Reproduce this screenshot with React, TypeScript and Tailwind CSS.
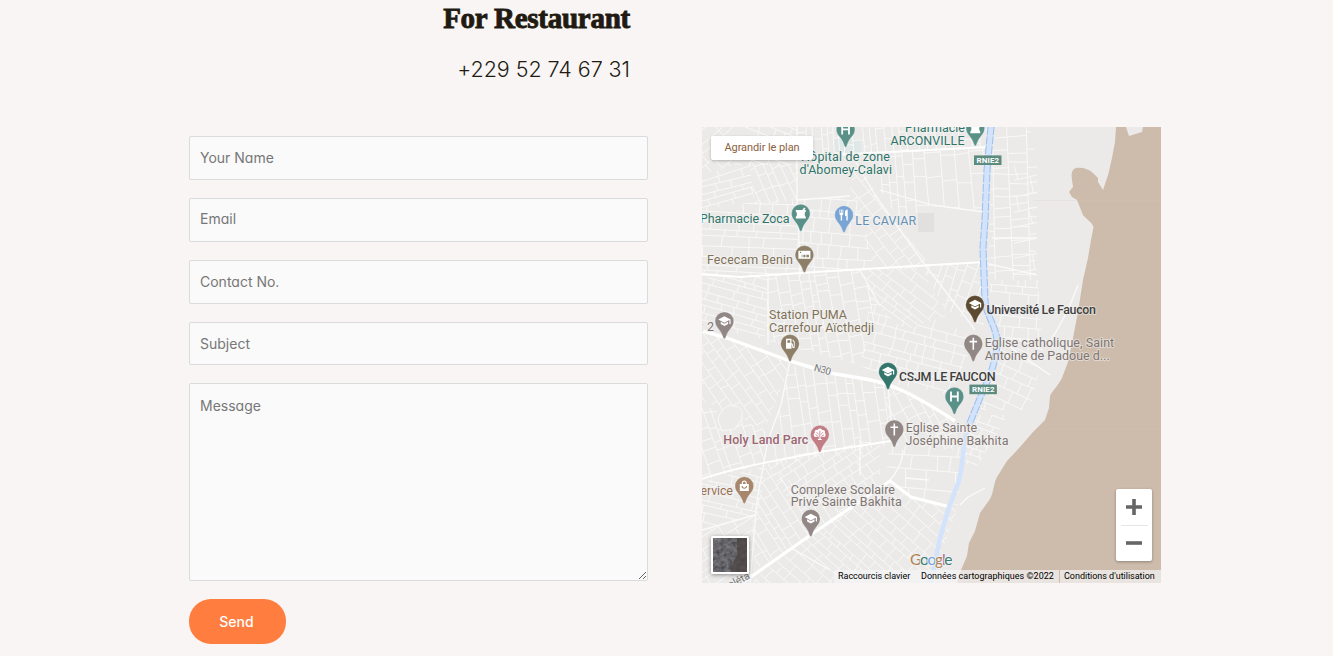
import type { ReactNode } from "react";

type Pt = [number, number];

type Patch = { poly: Pt[]; angle: number; row: number; step: number };

const PATCHES: Patch[] = [
  { poly: [[702, 127], [745, 127], [735, 165], [702, 175]], angle: -40, row: 9, step: 20 },
  { poly: [[745, 127], [797, 127], [797, 165], [735, 165]], angle: 20, row: 9, step: 18 },
  { poly: [[702, 175], [750, 162], [754, 200], [702, 210]], angle: -16, row: 8, step: 26 },
  { poly: [[750, 162], [797, 165], [797, 200], [754, 205]], angle: 65, row: 7, step: 16 },
  { poly: [[702, 208], [797, 198], [800, 274], [702, 278]], angle: 3, row: 8, step: 24 },
  { poly: [[797, 127], [868, 127], [868, 154], [797, 157]], angle: 86, row: 8, step: 22 },
  { poly: [[797, 200], [856, 196], [875, 270], [800, 274]], angle: 4, row: 10, step: 14 },
  { poly: [[856, 155], [880, 200], [925, 258], [925, 270], [875, 270], [850, 190]], angle: 52, row: 13, step: 14 },
  { poly: [[868, 127], [988, 127], [986, 148], [870, 154]], angle: 84, row: 9, step: 18 },
  { poly: [[870, 154], [986, 148], [984, 212], [932, 205], [900, 222], [880, 190]], angle: 85, row: 11, step: 24 },
  { poly: [[992, 127], [1030, 127], [1038, 170], [1035, 280], [988, 280]], angle: 88, row: 13, step: 13 },
  { poly: [[1014, 165], [1037, 165], [1037, 275], [1014, 275]], angle: -12, row: 12, step: 30 },
  { poly: [[702, 278], [768, 274], [765, 340], [702, 325]], angle: 16, row: 7, step: 20 },
  { poly: [[768, 274], [860, 270], [880, 306], [860, 365], [765, 340]], angle: 80, row: 10, step: 13 },
  { poly: [[860, 270], [920, 264], [945, 316], [905, 330], [870, 300]], angle: 38, row: 8, step: 19 },
  { poly: [[920, 264], [984, 262], [984, 326], [945, 310]], angle: -72, row: 8, step: 22 },
  { poly: [[870, 300], [905, 330], [940, 318], [975, 340], [950, 395], [888, 383], [860, 365]], angle: 15, row: 9, step: 15 },
  { poly: [[988, 280], [1038, 280], [1042, 340], [1000, 340]], angle: 5, row: 10, step: 13 },
  { poly: [[1000, 340], [1046, 340], [1030, 410], [980, 410]], angle: 24, row: 9, step: 17 },
  { poly: [[702, 332], [765, 348], [790, 365], [765, 430], [702, 400]], angle: 55, row: 9, step: 16 },
  { poly: [[790, 365], [885, 385], [890, 445], [770, 466], [775, 430]], angle: 82, row: 9, step: 19 },
  { poly: [[885, 385], [950, 415], [960, 450], [890, 445]], angle: 62, row: 9, step: 17 },
  { poly: [[702, 405], [765, 430], [766, 464], [702, 480]], angle: 72, row: 10, step: 14 },
  { poly: [[702, 482], [766, 466], [758, 515], [702, 530]], angle: 13, row: 7, step: 22 },
  { poly: [[766, 464], [880, 442], [880, 487], [840, 512], [790, 502]], angle: -34, row: 9, step: 13 },
  { poly: [[766, 466], [840, 512], [812, 534], [755, 570], [752, 520]], angle: 58, row: 8, step: 17 },
  { poly: [[702, 530], [755, 515], [750, 583], [702, 583]], angle: -32, row: 8, step: 24 },
  { poly: [[840, 512], [892, 482], [912, 497], [958, 507], [935, 570], [860, 583], [750, 583], [812, 534]], angle: 42, row: 8, step: 15 },
  { poly: [[890, 445], [963, 447], [958, 505], [912, 497], [885, 478]], angle: 4, row: 14, step: 24 },
  { poly: [[968, 415], [1008, 415], [975, 470], [962, 460]], angle: 20, row: 8, step: 14 },
];

function random(seed: number) {
  let s = seed * 7919 + 17;
  return () => {
    s = (s * 16807) % 2147483647;
    return s / 2147483647;
  };
}

function streets({ poly, angle, row, step }: Patch, seed: number) {
  const rnd = random(seed + 1);
  const cx = poly.reduce((a, p) => a + p[0], 0) / poly.length;
  const cy = poly.reduce((a, p) => a + p[1], 0) / poly.length;
  const r = Math.max(...poly.map((p) => Math.hypot(p[0] - cx, p[1] - cy)));
  const rad = (angle * Math.PI) / 180;
  const at = (u: number, v: number) =>
    `${(cx + u * Math.cos(rad) - v * Math.sin(rad)).toFixed(1)} ${(cy + u * Math.sin(rad) + v * Math.cos(rad)).toFixed(1)}`;
  let d = "";
  let v = -r;
  let tilt = 0;
  while (v < r) {
    const next = v + row * (0.65 + rnd() * 0.8);
    const nextTilt = (rnd() - 0.5) * 3;
    d += `M${at(-r, v - tilt)}L${at(r, v + tilt)}`;
    let u = -r + rnd() * step;
    while (u < r) {
      const lean = (rnd() - 0.5) * 3;
      d += `M${at(u, v + (tilt * u) / r)}L${at(u + lean, next + (nextTilt * u) / r)}`;
      u += step * (0.5 + rnd());
    }
    v = next;
    tilt = nextTilt;
  }
  return d;
}

const COAST =
  "M1116 127L1115 142L1112 158C1110 166 1109 173 1107 178L1103 190L1098 182V178L1093 173C1089 169 1082 167 1076 168C1072 169 1071 174 1072 180L1073 187L1069 192L1072 197L1077 200L1083 215C1086 219 1092 222 1093.500 227L1091 240L1088 258L1083 280L1078 312L1073 338L1068 362L1062 378C1058 386 1052 391 1050 396L1049 408L1045 420L1033 432L1020 447L1007 461L997 477C993 485 994 492 990 499L980 513L975 531L969 543L967 556L961 570L957 583H1161V127H1143L1142 132L1129 136L1126 127Z";

const RIVER_NORTH = "M991 124L987 170L985 220L983 248L985 300C986 316 996 325 997 341C997 364 986 384 980 398L969 426";
const RIVER_SOUTH = "M970 422L965 438C962 460 962 475 957 486L948 510L940 538L931 583";

type IconName = "cap" | "cross" | "h" | "flask" | "fork" | "money" | "fuel" | "tree" | "bag";

const ICONS: Record<IconName, ReactNode> = {
  cap: <path d="M-6.200 -1.800L0 -5L6.200 -1.800V2.800H5V-1.100L0 1.600ZM-3.700 .5L0 2.500L3.700 .5V2.700L0 4.700L-3.700 2.700Z" />,
  cross: <path d="M-.8 -6H.8V-3H3.800V-1.400H.8V6H-.8V-1.400H-3.800V-3H-.8Z" />,
  h: <path d="M-4.300 -5H-2.500V-1H2.500V-5H4.300V5H2.500V.8H-2.500V5H-4.300Z" />,
  flask: <path d="M-5 -3.500H1.500L3.300 -6L4.700 -5L3.700 -3.500H5V-2C3.500 -1 3.500 2 5 3.500V5H-5V3.500C-3.500 2 -3.500 -1 -5 -2Z" />,
  fork: <path d="M-4.500 -5.500H-3.900V-2H-3.200V-5.500H-2.200V-2H-1.500V-5.500H-.7V-1.500C-.7 -.5 -1.200 0 -1.900 .2V5.500H-3.300V.2C-4 0 -4.500 -.5 -4.500 -1.500ZM1 -3C1 -4.500 2 -5.500 3.700 -5.500V5.500H2.300V1H1Z" />,
  money: (
    <>
      <path d="M-6 -4H6V4H-6Z" />
      <path d="M-4.500 -3H-3.200V-1.700H-4.500ZM-2.700 0H-2V2.500H-2.700ZM-1 0H1V2.500H-1ZM2 0H4.500V2.500H2Z" fill="#8e8068" />
    </>
  ),
  fuel: (
    <>
      <path d="M-4 5V-5H1.500V-.5C3 -.5 3 1 3.100 2.500C3.200 3.300 3.800 3.200 3.800 2.500V-1.500L2.400 -3.500L3 -4.200L4.700 -2V2.700C4.700 5 2.200 5 2.200 2.700C2.200 1.500 2.200 .7 1.500 .6V5Z" />
      <path d="M-2.600 -3.600H.2V-1H-2.600Z" fill="#8e8068" />
    </>
  ),
  tree: (
    <>
      <path d="M-1 2L-4 2.500C-6.500 2 -6.500 -1 -5 -1.700C-5.800 -4 -3.500 -5.500 -2.200 -4.500C-1.200 -6.500 1.500 -6.500 2.200 -4.500C4.300 -5 5.800 -3.500 5 -1.700C6.500 -1 6 2.500 4 2.500L1 2V4.200L2.500 5.300H-2.500L-1 4.200Z" />
      <path d="M-3.300 -2.500L-1 0M3.300 -2.500L1 0M0 -4V4M-4.300 .3L-2 1.200M4.300 .3L2 1.200" stroke="#c17e84" strokeWidth=".8" />
    </>
  ),
  bag: (
    <>
      <path d="M-4.500 -2H-2.500V-3C-2.500 -6.300 2.500 -6.300 2.500 -3V-2H4.500V5H-4.500ZM-1.300 -2H1.300V-3C1.300 -4.600 -1.300 -4.600 -1.300 -3Z" fillRule="evenodd" />
      <path d="M-2.300 0C-2 3 2 3 2.300 0" fill="none" stroke="#a7866b" strokeWidth="1.100" />
    </>
  ),
};

const PINS: { x: number; y: number; color: string; icon: IconName }[] = [
  { x: 845.6, y: 129.4, color: "#599188", icon: "h" },
  { x: 975.3, y: 128.2, color: "#599188", icon: "flask" },
  { x: 800.8, y: 213.6, color: "#599188", icon: "flask" },
  { x: 844, y: 215, color: "#78a5d3", icon: "fork" },
  { x: 804.4, y: 254.8, color: "#8e8068", icon: "money" },
  { x: 724.4, y: 321.2, color: "#918785", icon: "cap" },
  { x: 790, y: 343.8, color: "#8e8068", icon: "fuel" },
  { x: 888, y: 371.8, color: "#34766b", icon: "cap" },
  { x: 975, y: 304.8, color: "#5d4b31", icon: "cap" },
  { x: 973.3, y: 343.8, color: "#918785", icon: "cross" },
  { x: 954.4, y: 396.6, color: "#599188", icon: "h" },
  { x: 894.3, y: 429.4, color: "#918785", icon: "cross" },
  { x: 819.8, y: 434.6, color: "#c17e84", icon: "tree" },
  { x: 744.3, y: 486, color: "#a7866b", icon: "bag" },
  { x: 810.8, y: 518.8, color: "#918785", icon: "cap" },
];

const TEAL = "#2f7469";
const GREY = "#7f7572";
const OLIVE = "#807258";
const DARK = "#3f3f3f";

type Label = { text: string; x: number; y: number; w: number; color: string; bold?: boolean };

const LABELS: Label[] = [
  { text: "Hôpital de zone", x: 801, y: 161, w: 89, color: TEAL },
  { text: "d'Abomey-Calavi", x: 799.5, y: 173.6, w: 92.5, color: TEAL },
  { text: "Pharmacie", x: 905, y: 132, w: 60, color: TEAL },
  { text: "ARCONVILLE", x: 890.5, y: 144.6, w: 74, color: TEAL },
  { text: "Pharmacie Zoca", x: 700, y: 223, w: 89.5, color: TEAL },
  { text: "LE CAVIAR", x: 855.3, y: 224.5, w: 61, color: "#6590b5" },
  { text: "Fececam Benin", x: 707, y: 264.2, w: 86, color: OLIVE },
  { text: "Station PUMA", x: 769, y: 319, w: 78, color: OLIVE },
  { text: "Carrefour Aïcthedji", x: 769, y: 331.6, w: 105, color: OLIVE },
  { text: "t 2", x: 698.5, y: 330.5, w: 15.5, color: GREY },
  { text: "Université Le Faucon", x: 986.5, y: 314.3, w: 109.5, color: DARK, bold: true },
  { text: "Eglise catholique, Saint", x: 984.7, y: 347, w: 129.5, color: GREY },
  { text: "Antoine de Padoue d...", x: 984.7, y: 359.6, w: 125, color: GREY },
  { text: "CSJM LE FAUCON", x: 899, y: 380.9, w: 96.5, color: DARK, bold: true },
  { text: "Eglise Sainte", x: 905.7, y: 432.2, w: 71.5, color: GREY },
  { text: "Joséphine Bakhita", x: 905.5, y: 444.9, w: 103, color: GREY },
  { text: "Holy Land Parc", x: 723.3, y: 444, w: 85, color: "#9c6670", bold: true },
  { text: "ervice", x: 700.5, y: 495.3, w: 32.5, color: "#9a7152" },
  { text: "Complexe Scolaire", x: 790.7, y: 493.6, w: 104.3, color: GREY },
  { text: "Privé Sainte Bakhita", x: 790.7, y: 506.4, w: 111, color: GREY },
];

function Shield({ x, y }: { x: number; y: number }) {
  return (
    <g>
      <rect x={x} y={y} width="27.500" height="9.600" fill="#5c8b80" />
      <text x={x + 2.6} y={y + 7.7} textLength="22.500" className="font-['Roboto',sans-serif] text-[8px] font-bold" fill="#fff">
        RNIE2
      </text>
    </g>
  );
}

function MapDrawing() {
  return (
    <svg viewBox="702 127 459 456" className="block h-full w-full">
      <rect x="702" y="127" width="459" height="456" fill="#ebeae9" />
      <rect x="918" y="213" width="16" height="19" fill="#e1e0df" />
      <rect x="834" y="139" width="27" height="14" fill="#dfe8e6" />
      <defs>
        {PATCHES.map((p, i) => (
          <clipPath id={`block-${i}`} key={i}>
            <polygon points={p.poly.map((q) => q.join(",")).join(" ")} />
          </clipPath>
        ))}
      </defs>
      <g stroke="#f8f8f7" strokeWidth="1" fill="none">
        {PATCHES.map((p, i) => (
          <g key={i} clipPath={`url(#block-${i})`}>
            <path d={streets(p, i)} />
          </g>
        ))}
      </g>
      <path d="M718 420C720 409 728 404 734 406C742 407 744 413 741 420L735 429L722 431Z" fill="#ebeae9" stroke="#f8f8f7" />
      <g stroke="#fafafa" strokeWidth="1.300" fill="none" strokeLinejoin="round">
        <path d="M797 127V200L800 260V276M797 200L850 196M850 152L875 195L925 265L960 310L975 330M768 274V345M860 270L880 306" />
        <path d="M790 360L781 405L768 440L757 500L750 583M888 385L893 445M903 450C903 462 895 475 890 480M702 530L755 515M791 548L830 570" />
        <path d="M1078 285C1068 312 1060 325 1051 340M1000 340L1050 375M992 238H1037M985 263L1037 275M960 505L968 497L985 488" />
        <path d="M860 440V475M905 478L929 480M880 190L932 205L984 212" />
      </g>
      <g stroke="#fff" fill="none" strokeLinejoin="round">
        <path d="M702 274L740 277L830 271L984 262M797 157L870 153L988 147" strokeWidth="1.800" />
        <path d="M702 479C740 466 780 460 820 452L897 440" strokeWidth="1.800" />
        <path d="M702 331L727 338L790 361L830 373L860 378C890 382 915 395 955 421" strokeWidth="3.400" />
        <path d="M742 583L765 567L812 534L850 508L890 481L911 497L950 507" strokeWidth="3.200" />
      </g>
      <path d={COAST} fill="#cdbbab" />
      <path d="M1033 200.500H1161M1040 429.500H1161" stroke="#d6c8b8" strokeWidth=".6" opacity=".4" />
      <path d={RIVER_SOUTH} fill="none" stroke="#d2e3fb" strokeWidth="4.600" />
      <path d={RIVER_NORTH} fill="none" stroke="#d2e3fb" strokeWidth="6" />
      <g fill="none" stroke="#9fc2ee" strokeWidth="1.100" strokeDasharray="8 1.500">
        <path d="M988 127L984 170L982 220L980 248L982 300C983 316 993 325 994 341C994 364 983 384 977 398L966 425" />
        <path d="M994 127L990 170L988 220L986 248L988 300C989 316 999 325 1000 341C1000 364 989 384 983 398L972 425" />
      </g>
      <Shield x={974} y={155.4} />
      <Shield x={969.4} y={384.6} />
      {PINS.map((p, i) => (
        <g key={i} transform={`translate(${p.x} ${p.y})`}>
          <path
            d="M0 -9.300A9.300 9.300 0 0 1 9.300 0C9.300 3.300 7.600 5.700 5.500 8.200C3.400 10.800 2 13.500 1.200 16.600Q0 18.600 -1.200 16.600C-2 13.500 -3.400 10.800 -5.500 8.200C-7.600 5.700 -9.300 3.300 -9.300 0A9.300 9.300 0 0 1 0 -9.300Z"
            fill={p.color}
            stroke="#f2f1f0"
            strokeWidth=".3"
          />
          <g fill="#fff">{ICONS[p.icon]}</g>
        </g>
      ))}
      <g stroke="#f1f0ef" strokeWidth="2" strokeLinejoin="round" paintOrder="stroke" className="font-['Roboto',sans-serif] text-[12.5px]">
        {LABELS.map((l) => (
          <text key={l.text} x={l.x} y={l.y} textLength={l.w} fill={l.color} className={l.bold ? "font-medium" : "font-normal"} strokeOpacity={l.x + l.w > 1070 ? 0.55 : 1}>
            {l.text}
          </text>
        ))}
        <text transform="translate(813.500 370.500) rotate(16)" textLength="17" fill="#777" className="text-[10px]">
          N30
        </text>
        <text transform="translate(730 588.500) rotate(-27)" fill="#777" className="text-[10.5px]">
          pléta
        </text>
        <text x="910" y="564.500" textLength="42.500" className="font-['Lato',sans-serif] text-[15.5px]">
          <tspan fill="#ad8255">G</tspan>
          <tspan fill="#397d73">o</tspan>
          <tspan fill="#6fa4e8">o</tspan>
          <tspan fill="#ad8255">g</tspan>
          <tspan fill="#a269a5">l</tspan>
          <tspan fill="#397d73">e</tspan>
        </text>
      </g>
    </svg>
  );
}

function Satellite() {
  return (
    <svg viewBox="0 0 34 34" className="block h-full w-full">
      <filter id="terrain" colorInterpolationFilters="sRGB">
        <feTurbulence type="fractalNoise" baseFrequency=".25" numOctaves="3" seed="8" />
        <feColorMatrix values=".35 0 0 0 .22 .35 0 0 0 .22 .35 0 0 0 .24 0 0 0 0 1" />
      </filter>
      <rect width="34" height="34" filter="url(#terrain)" />
      <path d="M24 0H34V34H18L20 24L24 17Z" fill="#4c4343" opacity=".75" />
    </svg>
  );
}

function LocationMap() {
  return (
    <div className="relative h-[456px] w-[459px] overflow-hidden font-['Roboto',sans-serif]">
      <MapDrawing />
      <a className="absolute left-[9px] top-[9px] flex h-6 w-[102px] items-center justify-center rounded-[2px] bg-white text-[11px] tracking-[-0.08px] text-[#8b6140] shadow-[0_1px_3px_rgba(0,0,0,0.25)]">
        Agrandir le plan
      </a>
      <div className="absolute bottom-[9px] left-[9px] size-[38px] overflow-hidden rounded-[2px] border-2 border-white shadow-[0_1px_4px_rgba(0,0,0,0.4)]">
        <Satellite />
      </div>
      <div className="absolute bottom-[22px] right-[9px] flex h-[72px] w-9 flex-col items-center rounded-[2px] bg-white shadow-[0_1px_3px_rgba(0,0,0,0.3)]">
        <button className="flex h-9 w-full items-center justify-center" aria-label="Zoom avant">
          <svg viewBox="0 0 16 16" className="size-4">
            <path d="M6.200 0H9.800V6.200H16V9.800H9.800V16H6.200V9.800H0V6.200H6.200Z" fill="#666" />
          </svg>
        </button>
        <div className="h-px w-[27px] bg-[#e6e6e6]" />
        <button className="flex h-[34px] w-full items-center justify-center" aria-label="Zoom arrière">
          <svg viewBox="0 0 16 16" className="size-4">
            <path d="M0 6.200H16V9.800H0Z" fill="#666" />
          </svg>
        </button>
      </div>
      <div className="absolute bottom-0 right-0 flex h-[13px] items-center whitespace-nowrap text-[9px] leading-[13px] text-black">
        <span className="w-[83px] bg-[#f5f5f5]/70 pl-[4px] tracking-[-0.03px]">Raccourcis clavier</span>
        <span className="w-[142px] bg-[#f5f5f5]/70 pl-[4px] tracking-[0.02px]">Données cartographiques ©2022</span>
        <span className="w-[102px] border-l border-[#cdbbab] bg-[#f5f5f5]/70 pl-[4px] tracking-[-0.02px]">Conditions d'utilisation</span>
      </div>
    </div>
  );
}

const FIELD =
  "block w-full rounded-[2px] border border-[#dadbdd] bg-[#fafafa] px-[10px] text-[14px] text-[#333] outline-none placeholder:text-[#777] placeholder:opacity-100";

export default function App() {
  return (
    <main className="h-[656px] w-full overflow-hidden bg-[#f9f5f4] pl-[189px] font-['Inter',sans-serif] [font-feature-settings:'cv11']">
      <header className="h-[127px] w-[441px] text-right text-[#211a12]">
        <h2 className="whitespace-nowrap font-['Liberation_Serif',serif] text-[29px] font-bold leading-[36px] tracking-[-0.25px] [-webkit-text-stroke:0.9px_#211a12]">
          For Restaurant
        </h2>
        <p className="pt-4 text-[21.5px] font-light leading-[34px] tracking-[-0.05px]">+229 52 74 67 31</p>
      </header>
      <div className="flex gap-[54px]">
        <form className="flex w-[459px] flex-col gap-[18px] pt-[9.2px]">
          <input className={`${FIELD} h-[43.8px] pb-[2px]`} placeholder="Your Name" />
          <input className={`${FIELD} h-[43.8px] pb-[2px]`} placeholder="Email" />
          <input className={`${FIELD} h-[43.8px]`} placeholder="Contact No." />
          <input className={`${FIELD} h-[43.8px]`} placeholder="Subject" />
          <textarea className={`${FIELD} h-[197.8px] resize py-[11px] leading-[21px]`} placeholder="Message" />
          <button type="button" className="h-[45px] w-[97px] rounded-[22px] bg-[#ff7d3f] pr-[2px] text-[14px] font-medium text-white">
            Send
          </button>
        </form>
        <LocationMap />
      </div>
    </main>
  );
}
